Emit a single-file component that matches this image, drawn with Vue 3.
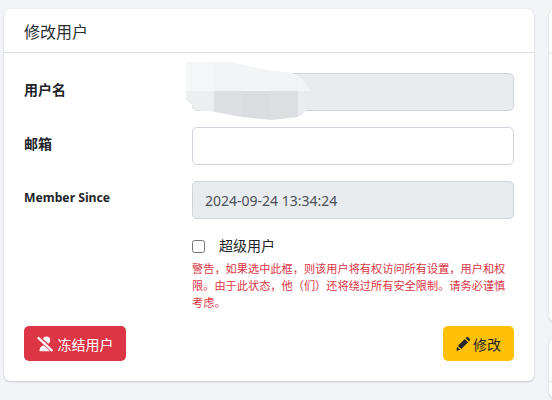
<script setup>
const fields = [
  { label: '用户名', value: '', disabled: true },
  { label: '邮箱', value: '', disabled: false },
  { label: 'Member Since', value: '2024-09-24 13:34:24', disabled: true, latin: true }
]
const bands = [
  { x: 0, w: 28, top: '#f5f6f7', bottom: '#eceef0' },
  { x: 28, w: 28, top: '#f2f3f5', bottom: '#dcdee1' },
  { x: 56, w: 28, top: '#f3f4f5', bottom: '#dadce0' },
  { x: 84, w: 28, top: '#f2f3f5', bottom: '#dcdee1' },
  { x: 112, w: 14, top: '#f3f4f6', bottom: '#e9ebee' }
]
</script>

<template>
  <div class="page">
    <main class="main">
      <section class="card">
        <header class="card-header">修改用户</header>
        <div class="card-body">
          <div v-for="f in fields" :key="f.label" class="row">
            <label class="label" :class="{ latin: f.latin }">{{ f.label }}</label>
            <div class="input" :class="{ disabled: f.disabled }">{{ f.value }}</div>
          </div>
          <div class="check-row">
            <div class="check-col">
              <div class="check-line">
                <span class="checkbox"></span>
                <span class="check-label">超级用户</span>
              </div>
              <p class="warning">警告，如果选中此框，则该用户将有权访问所有设置，用户和权限。由于此状态，他（们）还将绕过所有安全限制。请务必谨慎考虑。</p>
            </div>
          </div>
          <div class="actions">
            <button class="btn danger">
              <svg viewBox="0 0 16 16" width="16" height="16">
                <circle cx="9.5" cy="4.2" r="3.7" fill="#fff"/>
                <path d="M2.5 15.2c0-3.6 2-5.7 4.5-5.7h4c2.6 0 4.2 2.1 4.2 5.7z" fill="#fff"/>
                <path d="M0.8 0.8 15.6 14.8" stroke="#dc3545" stroke-width="4.2" fill="none"/>
                <path d="M0.8 1.4 15.4 15" stroke="#fff" stroke-width="2.2" fill="none"/>
              </svg>
              <span>冻结用户</span>
            </button>
            <button class="btn warn">
              <svg viewBox="0 0 16 16" width="14" height="14">
                <path d="M0.4 15.6 1.3 11 5 14.7z" fill="#212529"/>
                <path d="M2.2 10 10 2.2 13.8 6 6 13.8z" fill="#212529"/>
                <path d="M11 1.2 12 .4c.6-.5 1.4-.5 2 0l1.6 1.6c.5.6.5 1.4 0 2l-.8 1z" fill="#212529"/>
              </svg>
              <span>修改</span>
            </button>
          </div>
        </div>
        <svg class="smudge" viewBox="0 0 126 60" width="126" height="60" aria-hidden="true">
          <defs>
            <clipPath id="smudge-shape">
              <path d="M0 0H44L82 8 106 11C116 14 123 24 125 33 124 42 121 50 112 55L86 58 56 55 29 50 7 48 6 43 0 38z"/>
            </clipPath>
          </defs>
          <g clip-path="url(#smudge-shape)">
            <template v-for="b in bands" :key="b.x">
              <rect :x="b.x" y="0" :width="b.w" height="29" :fill="b.top"/>
              <rect :x="b.x" y="29" :width="b.w" height="31" :fill="b.bottom"/>
            </template>
          </g>
        </svg>
      </section>
      <aside class="side">
        <div class="side-card"><div class="side-head"></div></div>
        <div class="side-card second"><div class="side-head short"></div></div>
      </aside>
    </main>
    <div class="next-card"></div>
  </div>
</template>

<style scoped>
.page {
  width: 552px;
  height: 400px;
  overflow: hidden;
  background: #f3f4f8;
  padding: 9px 0 0 4px;
  box-sizing: border-box;
  font-family: "Noto Sans", "Noto Sans CJK SC", sans-serif;
  color: #212529;
}
.main {
  display: flex;
  gap: 15px;
  align-items: flex-start;
  width: 560px;
}
.card {
  position: relative;
  width: 530px;
  height: 372px;
  flex: none;
  box-sizing: border-box;
  background: #fff;
  border-radius: 6px;
  box-shadow: 0 1px 2px rgba(0, 0, 0, 0.16), 0 0 1px rgba(0, 0, 0, 0.14);
}
.card-header {
  height: 44px;
  box-sizing: border-box;
  padding: 0 20px;
  display: flex;
  align-items: center;
  font-size: 16px;
  border-bottom: 1px solid #dfe1e4;
  color: #2b3035;
}
.card-body {
  padding: 20px 20px 0;
  display: flex;
  flex-direction: column;
}
.row {
  display: grid;
  grid-template-columns: 168px 322px;
  height: 38px;
  margin-bottom: 16px;
}
.label {
  font-size: 14px;
  font-weight: 700;
  line-height: 33px;
}
.label.latin {
  font-size: 12.2px;
  line-height: 34px;
}
.input {
  box-sizing: border-box;
  height: 38px;
  border: 1px solid #ced4da;
  border-radius: 5px;
  background: #fff;
  padding: 0 12px;
  line-height: 37px;
  font-size: 14px;
  color: #495057;
}
.input.disabled {
  background: #e9ecef;
}
.check-row {
  padding-left: 168px;
  margin-top: -1px;
}
.check-col {
  width: 322px;
}
.check-line {
  display: flex;
  align-items: center;
  height: 24px;
}
.checkbox {
  width: 13px;
  height: 13px;
  box-sizing: border-box;
  border: 1px solid #767676;
  border-radius: 2.5px;
  background: #fff;
  margin-right: 14px;
}
.check-label {
  font-size: 14px;
  color: #212529;
  margin-bottom: 3px;
}
.warning {
  margin: 2px 0 0;
  font-size: 11.2px;
  line-height: 17px;
  color: #dc3545;
}
.actions {
  display: flex;
  justify-content: space-between;
  margin-top: 15px;
}
.btn {
  height: 35px;
  border: none;
  border-radius: 5px;
  display: flex;
  align-items: center;
  justify-content: center;
  font-family: inherit;
  font-size: 14px;
  padding: 0;
}
.btn.danger {
  width: 102px;
  background: #dc3545;
  color: #fff;
  gap: 5px;
}
.btn.warn {
  width: 71px;
  background: #ffc107;
  color: #212529;
  gap: 3px;
}
.smudge {
  position: absolute;
  left: 182px;
  top: 53px;
}
.side {
  display: flex;
  flex-direction: column;
  gap: 16px;
  flex: none;
}
.side-card {
  width: 40px;
  height: 313px;
  background: #fff;
  border-radius: 6px;
  box-shadow: 0 1px 2px rgba(0, 0, 0, 0.16), 0 0 1px rgba(0, 0, 0, 0.14);
}
.side-card.second {
  height: 60px;
}
.side-head {
  height: 44px;
  box-sizing: border-box;
  border-bottom: 1px solid #dfe1e4;
}
.next-card {
  width: 530px;
  height: 40px;
  margin-top: 16px;
  background: #fff;
  border-radius: 6px;
  box-shadow: 0 1px 2px rgba(0, 0, 0, 0.16), 0 0 1px rgba(0, 0, 0, 0.14);
}
</style>
